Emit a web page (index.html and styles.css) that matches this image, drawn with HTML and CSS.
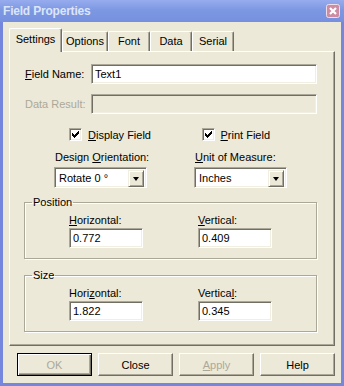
FILE: index.html
```html
<!DOCTYPE html>
<html lang="en">
<head>
    <meta charset="UTF-8">
    <title>Field Properties</title>
    <link rel="stylesheet" href="styles.css">
</head>
<body>
    <div class="window">
        <div class="titlebar">
            <span class="title">Field Properties</span>
            <svg class="close" width="14" height="14" viewBox="0 0 14 14">
                <rect x="0.5" y="0.5" width="13" height="13" rx="2" fill="#cc8ca4" stroke="#eedde6"/>
                <path d="M4 4 L10 10 M10 4 L4 10" stroke="#fff" stroke-width="2.2"/>
            </svg>
        </div>
        <div class="client">
            <div class="tabs">
                <div class="tab active" style="width:53px">Settings</div>
                <div class="tab" style="width:46px">Options</div>
                <div class="tab" style="width:42px">Font</div>
                <div class="tab" style="width:42px">Data</div>
                <div class="tab" style="width:42px">Serial</div>
            </div>
            <div class="panel">
                <div class="field-row first">
                    <span class="field-label"><u>F</u>ield Name:</span>
                    <div class="edit wide">Text1</div>
                </div>
                <div class="field-row second">
                    <span class="field-label off">Data Result:</span>
                    <div class="edit wide disabled"></div>
                </div>

                <div class="checks">
                    <div class="check-item">
                        <span class="checkbox">
                            <svg width="9" height="9" viewBox="0 0 9 9" shape-rendering="crispEdges">
                                <path d="M1 3h1v3h-1z M2 4h1v3h-1z M3 5h1v3h-1z M4 4h1v3h-1z M5 3h1v3h-1z M6 2h1v3h-1z M7 1h1v3h-1z" fill="#000"/>
                            </svg>
                        </span>
                        <span><u>D</u>isplay Field</span>
                    </div>
                    <div class="check-item">
                        <span class="checkbox">
                            <svg width="9" height="9" viewBox="0 0 9 9" shape-rendering="crispEdges">
                                <path d="M1 3h1v3h-1z M2 4h1v3h-1z M3 5h1v3h-1z M4 4h1v3h-1z M5 3h1v3h-1z M6 2h1v3h-1z M7 1h1v3h-1z" fill="#000"/>
                            </svg>
                        </span>
                        <span><u>P</u>rint Field</span>
                    </div>
                </div>

                <div class="combos">
                    <div class="combo-col">
                        <span class="combo-label">Design <u>O</u>rientation:</span>
                        <div class="combo">
                            <span class="combo-text">Rotate 0 °</span>
                            <span class="combo-btn"><span class="arrow"></span></span>
                        </div>
                    </div>
                    <div class="combo-col">
                        <span class="combo-label"><u>U</u>nit of Measure:</span>
                        <div class="combo">
                            <span class="combo-text">Inches</span>
                            <span class="combo-btn"><span class="arrow"></span></span>
                        </div>
                    </div>
                </div>

                <fieldset class="group">
                    <legend>Position</legend>
                    <div class="group-row">
                        <div class="group-col">
                            <span class="group-label"><u>H</u>orizontal:</span>
                            <div class="edit small">0.772</div>
                        </div>
                        <div class="group-col">
                            <span class="group-label"><u>V</u>ertical:</span>
                            <div class="edit small">0.409</div>
                        </div>
                    </div>
                </fieldset>

                <fieldset class="group size">
                    <legend>Size</legend>
                    <div class="group-row">
                        <div class="group-col">
                            <span class="group-label">Hori<u>z</u>ontal:</span>
                            <div class="edit small">1.822</div>
                        </div>
                        <div class="group-col">
                            <span class="group-label">Vertica<u>l</u>:</span>
                            <div class="edit small">0.345</div>
                        </div>
                    </div>
                </fieldset>
            </div>

            <div class="buttons">
                <button class="btn default" disabled>OK</button>
                <button class="btn">Close</button>
                <button class="btn" disabled><u>A</u>pply</button>
                <button class="btn">Help</button>
            </div>
        </div>
    </div>
</body>
</html>
```
FILE: styles.css
```css
body {
    margin: 0;
    font-family: "Liberation Sans", Arial, sans-serif;
    font-size: 11px;
    color: #000;
}

.window {
    width: 344px;
    height: 386px;
    background: #7487dc; /* frame */
    display: flex;
    flex-direction: column;
}

.titlebar {
    height: 22px;
    display: flex;
    align-items: center;
    justify-content: space-between;
    padding: 0 4px 0 3px;
    background: linear-gradient(#97acee, #7d98e2 45%, #7690e0);
}

.title {
    color: #dce5f8;
    font-weight: bold;
    font-size: 12px;
    letter-spacing: -0.2px;
    padding-bottom: 1px;
}

.close {
    display: block;
    margin-bottom: 1px;
}

.client {
    flex: 1;
    margin: 0 3px 3px;
    background: #ece9d8;
}

/* tab strip */
.tabs {
    display: flex;
    align-items: flex-end;
    height: 24px;
    margin: 6px 0 -1px 6px;
    position: relative;
    z-index: 1;
}

.tab {
    box-sizing: border-box;
    height: 20px;
    margin-bottom: 1px;
    padding-top: 3px;
    line-height: 13px;
    text-align: center;
    background: #ece9d8;
    border-top: 1px solid #fff;
    border-left: 1px solid #fff;
    border-right: 1px solid #716f64;
    border-radius: 2px 2px 0 0;
    box-shadow: inset -1px 0 #aca899;
}

.tab.active {
    height: 24px;
    margin-bottom: 0;
    padding-top: 4px;
}

.panel {
    box-sizing: border-box;
    height: 295px;
    margin: 0 6px;
    border: 1px solid;
    border-color: #fff #716f64 #716f64 #fff;
    box-shadow: inset -1px -1px #aca899;
}

/* sunken edit box */
.edit {
    box-sizing: border-box;
    height: 20px;
    line-height: 16px;
    background: #fff;
    border: 1px solid;
    border-color: #aca899 #fff #fff #aca899;
    box-shadow: inset 1px 1px #716f64, inset -1px -1px #f1efe2;
    padding: 1px 0 0 3px;
}

.edit.disabled {
    background: #ece9d8;
}

.edit.wide {
    width: 226px;
}

.edit.small {
    width: 74px;
    margin-top: 1px;
}

.field-row {
    display: flex;
    align-items: center;
    margin-left: 15px;
}

.field-row.first {
    margin-top: 12px;
}

.field-row.second {
    margin-top: 10px;
}

.field-label {
    width: 66px;
}

.off {
    color: #aca899;
}

.checks {
    display: flex;
    height: 13px;
    margin: 14px 0 0 59px;
}

.check-item {
    display: flex;
    align-items: center;
    gap: 6px;
    width: 133px;
}

.checkbox {
    box-sizing: border-box;
    width: 13px;
    height: 13px;
    padding: 1px;
    background: #fff;
    border: 1px solid;
    border-color: #aca899 #fff #fff #aca899;
    box-shadow: inset 1px 1px #716f64, inset -1px -1px #f1efe2;
}

.checkbox svg {
    display: block;
}

.combos {
    display: flex;
    margin: 10px 0 0 44px;
}

.combo-col {
    width: 142px;
}

.combo-label {
    display: block;
    line-height: 13px;
    padding-left: 1px;
    margin-bottom: 3px;
}

.combo {
    box-sizing: border-box;
    display: flex;
    width: 93px;
    height: 21px;
    padding: 2px;
    background: #fff;
    border: 1px solid;
    border-color: #aca899 #fff #fff #aca899;
    box-shadow: inset 1px 1px #716f64, inset -1px -1px #f1efe2;
}

.combo-text {
    flex: 1;
    line-height: 17px;
    padding-left: 2px;
}

.combo-btn {
    box-sizing: border-box;
    width: 16px;
    height: 17px;
    display: flex;
    align-items: center;
    justify-content: center;
    background: #ece9d8;
    border: 1px solid;
    border-color: #f1efe2 #716f64 #716f64 #f1efe2;
    box-shadow: inset 1px 1px #fff, inset -1px -1px #aca899;
}

.arrow {
    width: 0;
    height: 0;
    border-left: 3.5px solid transparent;
    border-right: 3.5px solid transparent;
    border-top: 4px solid #000;
}

/* group boxes */
.group {
    box-sizing: border-box;
    width: 293px;
    min-width: 0;
    margin: 8px 0 0 14px;
    padding: 5px 0 10px 0;
    border: 1px solid #aca899;
    box-shadow: 1px 1px 0 #fff, inset 1px 1px 0 #fff;
}

.group.size {
    margin-top: 10px;
}

.group legend {
    margin-left: 7px;
    padding: 0 1px;
    line-height: 13px;
}

.group-row {
    display: flex;
    padding-left: 44px;
}

.group-col {
    flex: none;
    width: 129px;
}

.group-label {
    display: block;
    line-height: 13px;
}

.buttons {
    display: flex;
    gap: 6px;
    margin: 7px 0 0 14px;
}

.btn {
    box-sizing: border-box;
    width: 75px;
    height: 23px;
    padding: 0;
    font: inherit;
    color: #000;
    background: #ece9d8;
    border: 1px solid;
    border-color: #fff #716f64 #716f64 #fff;
    box-shadow: inset -1px -1px #aca899;
}

.btn.default {
    border: 1px solid #000;
    box-shadow: inset 1px 1px #fff, inset -1px -1px #716f64, inset -2px -2px #aca899;
}

.btn:disabled {
    color: #aca899;
}
```
